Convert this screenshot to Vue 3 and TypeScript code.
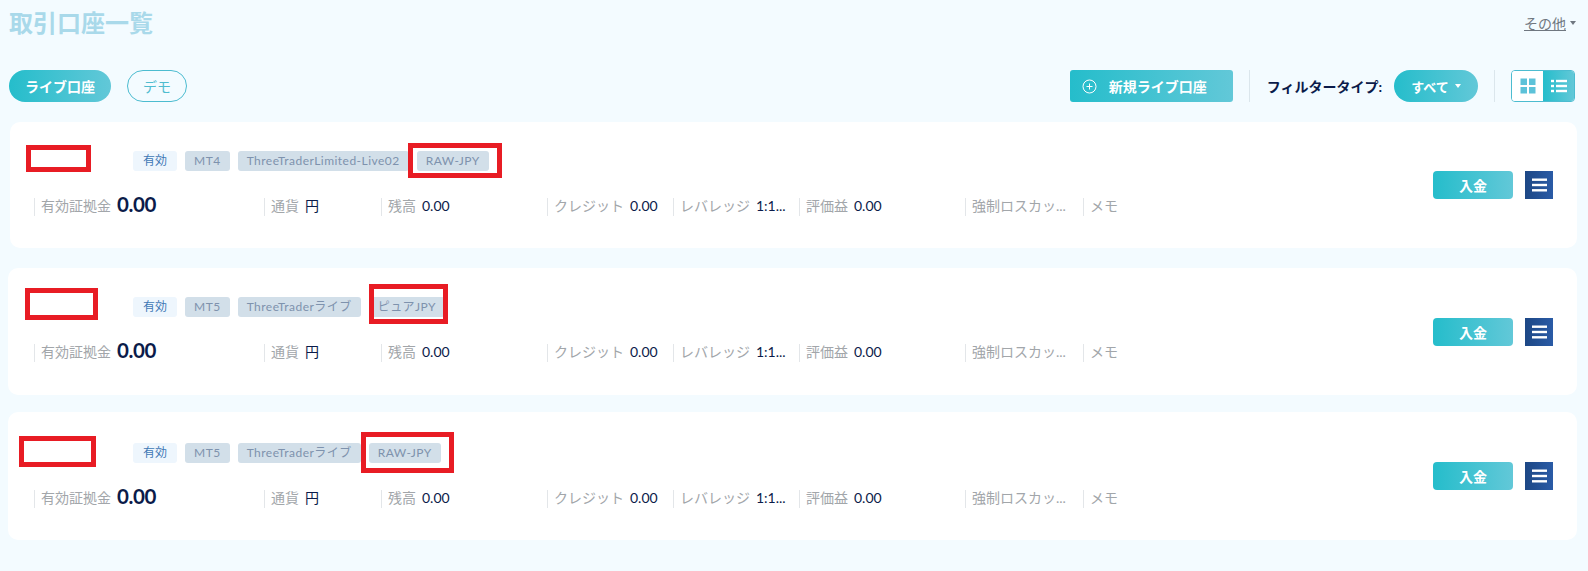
<script setup lang="ts">
interface Mark {
  left: number
  top: number
  width: number
  height: number
}

interface Account {
  id: number
  platform: string
  server: string
  type: string
  marks: Mark[]
}

const accounts: Account[] = [
  {
    id: 1,
    platform: 'MT4',
    server: 'ThreeTraderLimited-Live02',
    type: 'RAW-JPY',
    marks: [
      { left: 16, top: 23, width: 65, height: 27 },
      { left: 398, top: 21, width: 94, height: 35 }
    ]
  },
  {
    id: 2,
    platform: 'MT5',
    server: 'ThreeTraderライブ',
    type: 'ピュアJPY',
    marks: [
      { left: 17, top: 20, width: 73, height: 32 },
      { left: 361, top: 16, width: 79, height: 40 }
    ]
  },
  {
    id: 3,
    platform: 'MT5',
    server: 'ThreeTraderライブ',
    type: 'RAW-JPY',
    marks: [
      { left: 11, top: 24, width: 77, height: 31 },
      { left: 353, top: 20, width: 93, height: 41 }
    ]
  }
]

const fields = [
  { label: '通貨', value: '円' },
  { label: '残高', value: '0.00' },
  { label: 'クレジット', value: '0.00' },
  { label: 'レバレッジ', value: '1:1...' },
  { label: '評価益', value: '0.00' },
  { label: '強制ロスカッ...', value: '' },
  { label: 'メモ', value: '' }
]

const markStyle = (m: Mark) => ({
  left: `${m.left}px`,
  top: `${m.top}px`,
  width: `${m.width}px`,
  height: `${m.height}px`
})
</script>

<template>
  <div class="page">
    <header class="title-row">
      <h1 class="title">取引口座一覧</h1>
      <div class="more">
        <a class="more-link">その他</a>
        <span class="caret caret-grey"></span>
      </div>
    </header>

    <div class="toolbar">
      <div class="tabs">
        <button class="tab active">ライブ口座</button>
        <button class="tab">デモ</button>
      </div>
      <div class="tools">
        <button class="new-btn">
          <svg width="15" height="15" viewBox="0 0 15 15" fill="none" stroke="#fff" stroke-width="1">
            <circle cx="7.5" cy="7.5" r="6.5" />
            <path d="M7.5 4.5v6M4.5 7.5h6" />
          </svg>
          <span>新規ライブ口座</span>
        </button>
        <span class="divider"></span>
        <span class="filter-label">フィルタータイプ:</span>
        <button class="filter-btn">
          すべて
          <span class="caret"></span>
        </button>
        <span class="divider"></span>
        <div class="view-toggle">
          <span class="view grid-view">
            <svg width="16" height="16" viewBox="0 0 16 16" fill="#5cc2d9">
              <rect x="0.5" y="0.5" width="6.5" height="6.5" />
              <rect x="9" y="0.5" width="6.5" height="6.5" />
              <rect x="0.5" y="9" width="6.5" height="6.5" />
              <rect x="9" y="9" width="6.5" height="6.5" />
            </svg>
          </span>
          <span class="view list-view">
            <svg width="16" height="14" viewBox="0 0 16 14" fill="#fff">
              <rect x="0" y="0.8" width="3" height="2.4" />
              <rect x="5" y="0.8" width="11" height="2.4" />
              <rect x="0" y="5.8" width="3" height="2.4" />
              <rect x="5" y="5.8" width="11" height="2.4" />
              <rect x="0" y="10.8" width="3" height="2.4" />
              <rect x="5" y="10.8" width="11" height="2.4" />
            </svg>
          </span>
        </div>
      </div>
    </div>

    <div class="cards">
      <section v-for="acc in accounts" :key="acc.id" class="card">
        <div class="card-main">
          <div class="card-head">
            <span class="name"></span>
            <span class="badge badge-status">有効</span>
            <span class="badge">{{ acc.platform }}</span>
            <span class="badge">{{ acc.server }}</span>
            <span class="badge">{{ acc.type }}</span>
          </div>
          <div class="card-data">
            <div class="col">
              <span class="label">有効証拠金</span>
              <span class="equity">0.00</span>
            </div>
            <div v-for="f in fields" :key="f.label" class="col">
              <span class="label">{{ f.label }}</span>
              <span class="value">{{ f.value }}</span>
            </div>
          </div>
        </div>
        <div class="card-actions">
          <button class="deposit">入金</button>
          <button class="menu-btn" aria-label="メニュー">
            <svg width="15" height="14" viewBox="0 0 15 14" fill="#fff">
              <rect y="0.5" width="15" height="2.4" />
              <rect y="5.8" width="15" height="2.4" />
              <rect y="11.1" width="15" height="2.4" />
            </svg>
          </button>
        </div>
        <span v-for="(m, i) in acc.marks" :key="i" class="mark" :style="markStyle(m)"></span>
      </section>
    </div>
  </div>
</template>

<style>
html,
body {
  background: #f3fbff;
}
</style>

<style scoped>
.page {
  height: 571px;
  box-sizing: border-box;
  padding: 0 11px 0 8px;
  font-family: Lato, "Noto Sans CJK JP", sans-serif;
  font-size: 14px;
  overflow: hidden;
}

button {
  font-family: inherit;
  border: none;
  cursor: pointer;
}

.title-row {
  display: flex;
  justify-content: space-between;
  align-items: center;
  height: 46px;
  margin-bottom: 24px;
  padding: 0 1px 0 1px;
}

.title {
  margin: 0;
  font-size: 24px;
  font-weight: 700;
  color: #a9d9ea;
  line-height: 32px;
}

.more {
  display: flex;
  align-items: center;
  gap: 4px;
  color: #6f7780;
}

.more-link {
  text-decoration: underline;
}

.caret {
  display: inline-block;
  width: 0;
  height: 0;
  border-left: 3.5px solid transparent;
  border-right: 3.5px solid transparent;
  border-top: 4.5px solid #fff;
}

.caret-grey {
  border-top-color: #6f7780;
}

.toolbar {
  display: flex;
  justify-content: space-between;
  align-items: center;
  height: 32px;
  margin-bottom: 20px;
  padding: 0 2px 0 1px;
}

.tabs {
  display: flex;
  gap: 16px;
}

.tab {
  height: 32px;
  padding: 0 15px;
  border-radius: 16px;
  border: 1px solid #4cbcd0;
  background: transparent;
  color: #4fbccf;
  font-size: 14px;
}

.tab.active {
  padding: 0 16px;
  border: none;
  background: linear-gradient(90deg, #25bdcb, #62c8d8);
  color: #fff;
  font-weight: 700;
}

.tools {
  display: flex;
  align-items: center;
}

.new-btn {
  display: flex;
  align-items: center;
  gap: 12px;
  width: 163px;
  height: 32px;
  padding: 0 0 0 12px;
  border-radius: 3px;
  background: linear-gradient(90deg, #25bdcb, #62c8d8);
  color: #fff;
  font-size: 14px;
  font-weight: 700;
}

.divider {
  width: 1px;
  height: 32px;
  margin: 0 16px;
  background: #dbe6ec;
}

.filter-label {
  margin: 0 12px 0 1px;
  color: #0b1b4a;
  font-weight: 700;
}

.filter-btn {
  display: flex;
  align-items: center;
  justify-content: center;
  gap: 6px;
  width: 84px;
  height: 32px;
  border-radius: 16px;
  background: linear-gradient(90deg, #25bdcb, #62c8d8);
  color: #fff;
  font-size: 13px;
  font-weight: 700;
}

.view-toggle {
  display: flex;
  width: 64px;
  height: 32px;
  box-sizing: border-box;
  border: 1px solid #4cbcd0;
  border-radius: 4px;
  overflow: hidden;
}

.view {
  flex: 1;
  display: flex;
  align-items: center;
  justify-content: center;
}

.grid-view {
  background: #fff;
}

.list-view {
  background: linear-gradient(90deg, #25bdcb, #62c8d8);
}

.cards {
  display: flex;
  flex-direction: column;
}

.card {
  position: relative;
  display: flex;
  justify-content: space-between;
  align-items: center;
  height: 127px;
  box-sizing: border-box;
  padding: 0 24px 0 26px;
  background: #fff;
  border-radius: 10px;
}

/* the cards were not cut evenly in the screenshot */
.card:nth-child(1) {
  height: 126px;
  margin: 0 0 20px 2px;
  padding-left: 24px;
}

.card:nth-child(2) {
  margin-bottom: 17px;
}

.card:nth-child(3) {
  height: 128px;
}

.card-main {
  align-self: flex-start;
  padding-top: 29px;
}

.card:nth-child(3) .card-main {
  padding-top: 31px;
}

.card-head {
  display: flex;
  align-items: center;
  gap: 8px;
  height: 20px;
}

.name {
  width: 91px;
}

.badge {
  height: 20px;
  line-height: 20px;
  padding: 0 9px;
  border-radius: 3px;
  background: #d2dfe9;
  color: #7e92ad;
  font-size: 12px;
  letter-spacing: 0.47px;
  white-space: nowrap;
}

.badge-status {
  padding: 0 10px;
  background: #eef6fd;
  color: #3f78b5;
  letter-spacing: 0;
}

.card-data {
  display: grid;
  grid-template-columns: 230px 117px 166px 126px 126px 166px 118px 100px;
  grid-template-rows: 18px;
  margin-top: 27px;
}

.col {
  display: flex;
  align-items: center;
  gap: 6px;
  padding: 0 0 4px 6px;
  border-left: 1px solid #e3e6e9;
  white-space: nowrap;
}

.label {
  color: #a2a6aa;
}

.value {
  color: #0b1b4a;
}

.equity {
  margin-bottom: 3px;
  color: #0b1b4a;
  font-size: 20.5px;
  line-height: 18px;
  letter-spacing: -0.4px;
  font-weight: 700;
}

.card-actions {
  display: flex;
  align-items: center;
  gap: 12px;
}

.deposit {
  width: 80px;
  height: 28px;
  border-radius: 4px;
  background: linear-gradient(90deg, #25bdcb, #62c8d8);
  color: #fff;
  font-size: 14px;
  font-weight: 700;
}

.menu-btn {
  display: flex;
  align-items: center;
  justify-content: center;
  width: 28px;
  height: 28px;
  padding: 0;
  background: linear-gradient(90deg, #1d4785, #2a5ba6);
}

.mark {
  position: absolute;
  box-sizing: border-box;
  border: 5px solid #e81c24;
}
</style>
